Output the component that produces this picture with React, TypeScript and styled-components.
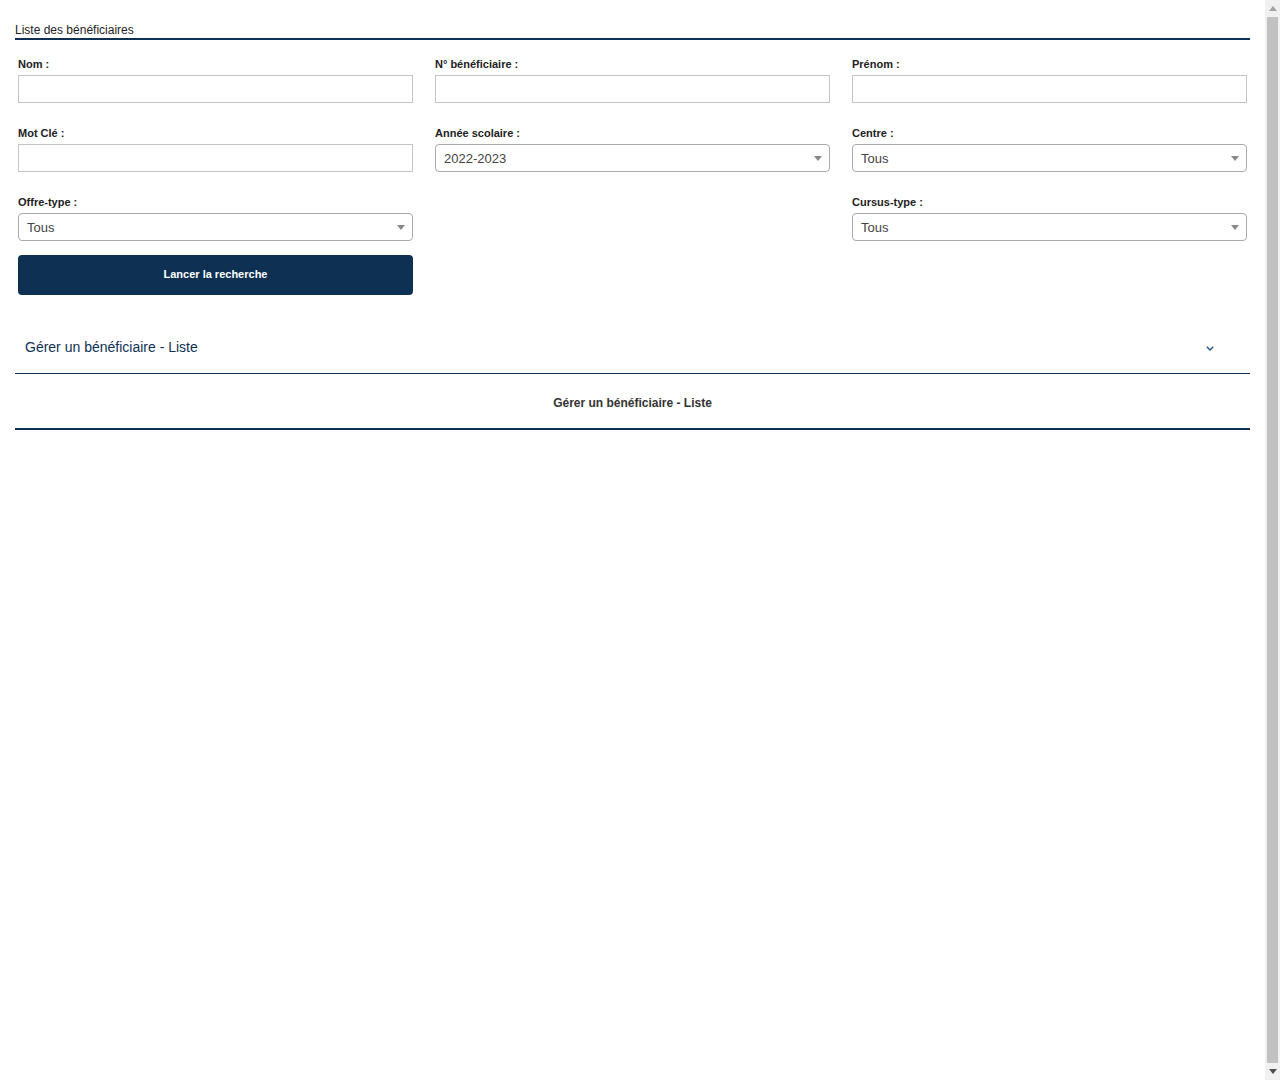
import React from "react";
import styled, { createGlobalStyle } from "styled-components";

const GlobalStyle = createGlobalStyle`
  html {
    overflow-y: scroll;
  }
  body {
    margin: 0;
    background: #fff;
    font-family: "Liberation Sans", Arial, sans-serif;
    color: #333;
  }
`;

const NAVY = "#0e3052";

interface FieldProps {
  label: string;
  value?: string;
  select?: boolean;
}

function Field({ label, value = "", select = false }: FieldProps) {
  return (
    <Group>
      <Label>{label}</Label>
      {select ? (
        <SelectBox>
          <span>{value}</span>
          <Caret />
        </SelectBox>
      ) : (
        <TextInput type="text" defaultValue={value} />
      )}
    </Group>
  );
}

// the classic window scrollbar seen on the right edge of the page
function FakeScrollbar() {
  return (
    <Scrollbar>
      <ArrowButton>
        <svg width="8" height="5" viewBox="0 0 8 5">
          <polygon points="0,5 4,0 8,5" fill="#a3a3a3" />
        </svg>
      </ArrowButton>
      <Track>
        <Thumb />
      </Track>
      <ArrowButton>
        <svg width="8" height="5" viewBox="0 0 8 5">
          <polygon points="0,0 8,0 4,5" fill="#505050" />
        </svg>
      </ArrowButton>
    </Scrollbar>
  );
}

export default function App() {
  return (
    <Page>
      <GlobalStyle />
      <Title>Liste des bénéficiaires</Title>

      <Form>
        <Field label="Nom :" />
        <Field label="N° bénéficiaire :" />
        <Field label="Prénom :" />
        <Field label="Mot Clé :" />
        <Field label="Année scolaire :" value="2022-2023" select />
        <Field label="Centre :" value="Tous" select />
        <Field label="Offre-type :" value="Tous" select />
        <div />
        <Field label="Cursus-type :" value="Tous" select />
      </Form>

      <ButtonRow>
        <SearchButton type="button">Lancer la recherche</SearchButton>
      </ButtonRow>

      <AccordionHeader>
        <AccordionTitle>Gérer un bénéficiaire - Liste</AccordionTitle>
        <svg width="8" height="5" viewBox="0 0 8 5" style={{ marginRight: 36, marginTop: 4 }}>
          <polyline
            points="0.8,0.8 4,4 7.2,0.8"
            fill="none"
            stroke="#1d4f8f"
            strokeWidth="1.3"
          />
        </svg>
      </AccordionHeader>

      <ResultPanel>Gérer un bénéficiaire - Liste</ResultPanel>

      <FakeScrollbar />
    </Page>
  );
}

const Page = styled.div`
  padding: 22px 30px 0 15px;
`;

const Title = styled.div`
  font-size: 12px;
  line-height: 14px;
  color: #222;
  padding-top: 1px;
  padding-bottom: 1px;
  border-bottom: 2px solid ${NAVY};
`;

const Form = styled.div`
  display: grid;
  grid-template-columns: repeat(3, 1fr);
  column-gap: 22px;
  row-gap: 23px;
  padding: 17px 3px 0;
`;

const Group = styled.div`
  display: flex;
  flex-direction: column;
`;

const Label = styled.label`
  font-size: 11px;
  font-weight: bold;
  line-height: 14px;
  color: #222;
  margin-bottom: 4px;
`;

const TextInput = styled.input`
  box-sizing: border-box;
  height: 28px;
  border: 1px solid #c4c4c4;
  border-radius: 0;
  padding: 0 8px;
  font-family: inherit;
  font-size: 13px;
  outline: none;
`;

const SelectBox = styled.div`
  box-sizing: border-box;
  height: 28px;
  border: 1px solid #aaa;
  border-radius: 4px;
  padding: 0 8px;
  display: flex;
  align-items: center;
  justify-content: space-between;
  font-size: 13px;
  color: #444;
`;

const Caret = styled.span`
  width: 0;
  height: 0;
  border-left: 4px solid transparent;
  border-right: 4px solid transparent;
  border-top: 5px solid #888;
  margin-right: -1px;
`;

const ButtonRow = styled.div`
  display: grid;
  grid-template-columns: repeat(3, 1fr);
  column-gap: 22px;
  padding: 0 3px;
  margin-top: 14px;
`;

const SearchButton = styled.button`
  height: 40px;
  padding: 0 0 2px;
  border: none;
  border-radius: 4px;
  background: ${NAVY};
  color: #fff;
  font-family: inherit;
  font-size: 11px;
  font-weight: bold;
  cursor: pointer;
`;

const AccordionHeader = styled.div`
  margin-top: 28px;
  height: 51px;
  padding-bottom: 3px;
  box-sizing: border-box;
  display: flex;
  align-items: center;
  justify-content: space-between;
  padding-left: 10px;
  border-bottom: 1px solid ${NAVY};
`;

const AccordionTitle = styled.span`
  font-size: 14px;
  color: ${NAVY};
`;

const ResultPanel = styled.div`
  box-sizing: border-box;
  height: 56px;
  padding-top: 3px;
  display: flex;
  align-items: center;
  justify-content: center;
  font-size: 12px;
  font-weight: bold;
  color: #333;
  border-bottom: 2px solid ${NAVY};
`;

const Scrollbar = styled.div`
  position: fixed;
  top: 0;
  right: 0;
  width: 15px;
  height: 100vh;
  background: #f1f1f1;
  display: flex;
  flex-direction: column;
`;

const ArrowButton = styled.div`
  height: 17px;
  display: flex;
  align-items: center;
  justify-content: center;
`;

const Track = styled.div`
  flex: 1;
  padding: 0 2px;
  display: flex;
`;

const Thumb = styled.div`
  flex: 1;
  background: #c1c1c1;
`;
